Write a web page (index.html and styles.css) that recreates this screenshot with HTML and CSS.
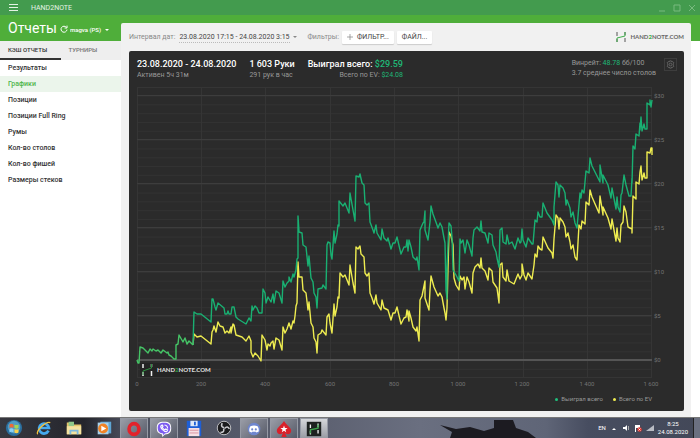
FILE: index.html
```html
<!DOCTYPE html>
<html lang="ru">
<head>
    <meta charset="UTF-8">
    <meta name="viewport" content="width=device-width, initial-scale=1.0">
    <title>HAND2NOTE</title>
    <link rel="stylesheet" href="styles.css">
</head>
<body>
    <!-- Window title bar -->
    <header class="titlebar">
        <button class="menu-btn" aria-label="Menu"><span></span><span></span><span></span></button>
        <span class="app-name">HAND2NOTE</span>
        <div class="window-buttons">
            <button aria-label="Minimize"><svg viewBox="0 0 8 8"><path d="M1 7H7"/></svg></button>
            <button aria-label="Maximize"><svg viewBox="0 0 8 8"><path d="M1 1H7V7H1Z"/></svg></button>
            <button aria-label="Close"><svg viewBox="0 0 8 8"><path d="M1 1L7 7M7 1L1 7"/></svg></button>
        </div>
    </header>

    <div class="app">
        <aside class="sidebar">
            <div class="sidebar-head">
                <h1>Отчеты</h1>
                <button class="refresh" aria-label="Refresh">
                    <svg viewBox="0 0 8 8"><path d="M6.4 2.4A3 3 0 1 0 7 4.6M7 .6V3H4.6"/></svg>
                </button>
                <div class="dropdown account">
                    <select aria-label="Account"><option>magva (PS)</option></select>
                    <span class="caret"></span>
                </div>
            </div>
            <div class="tabs">
                <button class="tab active">КЭШ ОТЧЕТЫ</button>
                <button class="tab">ТУРНИРЫ</button>
            </div>
            <nav>
                <ul class="menu">
                    <li><a href="#">Результаты</a></li>
                    <li><a href="#" class="active">Графики</a></li>
                    <li><a href="#">Позиции</a></li>
                    <li><a href="#">Позиции Full Ring</a></li>
                    <li><a href="#">Румы</a></li>
                    <li><a href="#">Кол-во столов</a></li>
                    <li><a href="#">Кол-во фишей</a></li>
                    <li><a href="#">Размеры стеков</a></li>
                </ul>
            </nav>
        </aside>

        <main class="content">
            <div class="toolbar">
                <label for="range">Интервал дат:</label>
                <div class="dropdown range">
                    <select id="range"><option>23.08.2020 17:15 - 24.08.2020 3:15</option></select>
                    <span class="caret"></span>
                </div>
                <span class="filters-label">Фильтры:</span>
                <button class="btn"><svg viewBox="0 0 8 8"><path d="M4 0V8M0 4H8"/></svg>ФИЛЬТР...</button>
                <button class="btn">ФАЙЛ...</button>
                <div class="brand">
                    <svg viewBox="0 0 12 12"><path class="post" d="M2 1V5M2 8V11M10 1V4M10 7V11"/><path class="link" d="M2 11V7L10 5V1"/></svg>
                    <span>HAND<b>2</b>NOTE.COM</span>
                </div>
            </div>

            <section class="card">
                <div class="stats">
                    <div class="stat">
                        <strong>23.08.2020 - 24.08.2020</strong>
                        <span>Активен 5ч 31м</span>
                    </div>
                    <div class="stat">
                        <strong>1 603 Руки</strong>
                        <span>291 рук в час</span>
                    </div>
                    <div class="stat won">
                        <strong>Выиграл всего: <em>$29.59</em></strong>
                        <span>Всего по EV: <em>$24.08</em></span>
                    </div>
                    <div class="stat rate">
                        <span>Винрейт: <em>48.78</em> бб/100</span>
                        <span>3.7 среднее число столов</span>
                    </div>
                    <button class="gear" aria-label="Settings">
                        <svg viewBox="0 0 10 10"><path d="M4 1H6L6.4 2.2L7.6 1.8L8.8 3.2L8 4.2V5.8L8.8 6.8L7.6 8.2L6.4 7.8L6 9H4L3.6 7.8L2.4 8.2L1.2 6.8L2 5.8V4.2L1.2 3.2L2.4 1.8L3.6 2.2Z"/><circle cx="5" cy="5" r="1.5"/></svg>
                    </button>
                </div>

                <svg class="chart" viewBox="129 84 555 308">
                    <defs>
                        <pattern id="minor" x="137" y="95.5" width="515" height="8.82" patternUnits="userSpaceOnUse">
                            <path d="M0 .5H515" class="minor"/>
                        </pattern>
                    </defs>
                    <rect x="137" y="87" width="515" height="290" fill="url(#minor)"/>
                    <path class="grid" d="M137.5 87V377M201.5 87V377M265.5 87V377M330.5 87V377M394.5 87V377M458.5 87V377M523.5 87V377M587.5 87V377M651.5 87V377M137 87.5H652M137 377.5H652"/>
                    <path class="major" d="M137 95.5H652M137 139.5H652M137 183.5H652M137 227.5H652M137 271.5H652M137 315.5H652"/>
                    <path class="zero" d="M137 360H652"/>

                    <g class="axis">
                        <text x="654" y="98">$30</text>
                        <text x="654" y="142">$25</text>
                        <text x="654" y="186">$20</text>
                        <text x="654" y="230">$15</text>
                        <text x="654" y="274">$10</text>
                        <text x="654" y="318">$5</text>
                        <text x="654" y="362">$0</text>
                    </g>
                    <g class="axis bottom">
                        <text x="137" y="386">0</text>
                        <text x="201" y="386">200</text>
                        <text x="265" y="386">400</text>
                        <text x="330" y="386">600</text>
                        <text x="394" y="386">800</text>
                        <text x="458" y="386">1 000</text>
                        <text x="522" y="386">1 200</text>
                        <text x="587" y="386">1 400</text>
                        <text x="651" y="386">1 600</text>
                    </g>

                    <!-- Logo inside the chart -->
                    <rect class="logo-bg" x="140" y="363" width="70" height="14"/>
                    <g class="logo">
                        <path class="post" d="M143 364V368M143 372V376M151.500 364V367M151.500 371V376"/>
                        <path class="link" d="M143 375V371L151.500 368V364"/>
                        <text x="157" y="372">HAND<tspan>2</tspan>NOTE.COM</text>
                    </g>

                    <!-- Total by EV -->
                    <polyline class="line ev" points="193,345 194,334 197,337 201,336 211,344 212,332 213,330 214,326 216,332 218,322 220,326 223,327 225,333 227,331 229,333 231,327 231,333 233,324 234,325 236,335 242,337 246,341 249,336 251,341 251,352 253,357 255,353 258,356 261,361 262,335 265,340 267,350 268,344 270,346 271,343 273,341 274,349 276,338 279,340 282,350 283,327 285,333 287,329 289,323 291,329 293,321 294,323 295,316 296,306 297,303 298,262 299,277 302,277 303,290 306,293 308,310 309,302 311,323 313,327 314,338 316,342 317,353 318,335 321,333 322,330 326,335 327,317 329,314 330,323 332,333 334,304 335,316 337,307 338,297 339,298 340,273 343,277 345,275 349,285 350,265 353,283 355,293 356,247 358,249 360,246 361,254 364,257 365,273 367,276 369,273 370,293 372,298 374,304 376,295 377,303 381,310 382,300 384,308 388,310 391,320 393,313 395,313 397,307 401,324 404,318 406,317 407,310 409,321 409,311 411,318 413,327 416,331 417,327 419,341 420,300 422,296 425,281 425,298 429,310 430,290 431,276 434,287 438,296 440,293 442,297 444,308 445,313 446,320 447,308 448,268 449,232 451,236 453,245 454,278 456,285 459,290 460,276 462,280 464,277 465,289 467,277 469,282 472,293 473,273 475,267 478,264 480,268 481,258 482,268 485,271 488,280 489,268 492,271 493,282 497,288 499,303 500,265 502,263 503,277 506,281 507,270 509,281 514,284 518,274 520,279 522,275 522,264 524,275 526,280 528,273 532,279 534,265 535,254 537,257 538,246 540,249 542,250 543,237 548,248 552,253 553,258 554,239 556,215 558,218 559,229 560,218 563,222 565,227 566,237 568,233 570,242 571,249 573,245 575,257 577,260 579,225 581,229 582,221 585,224 586,202 589,205 590,190 592,197 599,213 600,196 603,215 603,207 608,218 611,229 612,219 616,241 617,228 618,238 620,242 621,225 623,222 624,206 626,212 628,227 632,229 632,233 633,196 636,199 636,182 639,184 640,172 641,166 642,180 644,173 645,178 647,178 647,152 650,153 651,148 652,148 652,155"/>
                    <!-- Total won -->
                    <polyline class="line won" points="193,345 194,312 197,314 201,314 211,322 212,299 213,299 215,307 216,310 218,303 224,308 225,314 227,314 228,311 229,314 231,314 232,307 234,307 236,317 238,319 246,324 249,318 251,321 252,306 253,310 255,306 257,308 259,313 262,313 263,289 265,293 266,303 268,297 271,302 273,294 274,303 276,291 279,293 282,303 283,281 285,287 287,283 289,281 289,277 291,282 293,274 294,277 296,270 297,259 298,258 298,216 299,232 302,233 303,245 306,247 308,266 309,256 311,278 313,282 314,293 316,297 317,308 318,289 322,288 323,285 326,289 327,245 328,242 330,243 331,255 332,259 334,231 335,243 337,234 338,225 339,226 339,201 343,206 345,203 349,213 350,193 353,210 355,221 356,176 359,177 360,174 362,183 364,185 365,203 367,205 369,203 370,222 373,230 374,233 376,225 377,233 381,240 382,229 384,238 387,241 388,238 391,249 393,243 395,243 397,237 401,254 404,247 406,247 407,240 408,251 409,240 411,247 413,257 416,260 417,257 419,270 420,230 423,223 424,222 425,211 425,230 428,240 430,222 431,206 433,214 437,225 438,228 440,223 442,227 444,238 445,243 446,290 447,299 447,268 449,223 451,226 452,237 453,270 456,275 459,281 460,239 461,243 463,240 465,253 467,240 469,245 472,256 473,238 474,230 477,227 480,231 481,221 482,232 485,233 488,243 489,233 492,235 493,245 496,252 497,258 499,267 500,230 502,228 503,242 506,244 507,235 509,244 512,242 515,249 518,238 520,243 521,242 522,229 523,240 526,247 528,238 532,244 533,244 534,232 535,220 537,222 538,212 540,217 542,217 543,203 547,213 552,220 554,225 554,207 556,182 558,185 559,197 560,185 563,188 565,193 566,205 567,200 570,208 571,217 573,212 575,223 577,228 580,193 581,198 582,190 584,193 586,171 589,173 590,158 592,166 600,182 600,165 603,183 603,175 608,185 611,198 612,188 616,209 617,197 618,207 620,212 621,195 622,193 624,175 626,185 629,196 631,196 632,178 632,183 633,146 635,149 636,134 639,136 640,123 640,130 641,117 642,131 644,124 645,129 647,129 647,103 650,105 650,100 651,107 652,100"/>
                    <polyline class="line both" points="137,360 138,363 139,363 140,347 143,348 145,350 148,353 150,349 152,351 153,349 156,351 158,350 161,353 163,350 167,353 168,352 169,355 171,356 174,359 176,359 176,345 178,344 179,335 183,342 185,338 187,344 189,341 193,345"/>
                </svg>

                <div class="legend">
                    <span class="won">Выиграл всего</span>
                    <span class="ev">Всего по EV</span>
                </div>
            </section>
        </main>
    </div>

    <!-- Desktop taskbar -->
    <footer class="taskbar">
        <svg class="wallpaper" viewBox="0 0 700 20" preserveAspectRatio="none">
            <path d="M440 7L456 11L470 9L484 13L494 10V2H513L516 10L528 14L536 20H450L452 14Z"/>
        </svg>
        <button class="task" aria-label="Start">
            <svg viewBox="0 0 20 20"><circle cx="10" cy="10" r="9" fill="#2b6d9c"/><circle cx="10" cy="9" r="7" fill="#4f9cc4"/><path d="M5 6Q7 4.500 9.500 6V10Q7 8.500 5 10Z" fill="#f06a35"/><path d="M10.500 6Q13 7.500 15 6V10Q13 11.500 10.500 10Z" fill="#a6d650"/><path d="M5 11Q7 9.500 9.500 11V15Q7 13.500 5 15Z" fill="#8fd2f5"/><path d="M10.500 11Q13 12.500 15 11V15Q13 16.500 10.500 15Z" fill="#fbd14b"/></svg>
        </button>
        <button class="task" aria-label="Internet Explorer">
            <svg viewBox="0 0 20 20" fill="none"><path d="M15 13A5.500 5.500 0 1 1 15.500 10H5" stroke="#45a9ee" stroke-width="3"/><path d="M3 17C0 14 12 2 17 4" stroke="#f2c33d" stroke-width="1.500"/></svg>
        </button>
        <button class="task" aria-label="Explorer">
            <svg viewBox="0 0 20 20"><path d="M2 4H8L9 6H18V17H2Z" fill="#e3c46b"/><path d="M4 3H10V8H4Z" fill="#8fc98a"/><path d="M2 8H18V17H2Z" fill="#f5e3a0"/><path d="M6 17V13H14V17" stroke="#7db8dd" stroke-width="2" fill="none"/></svg>
        </button>
        <button class="task" aria-label="Media player">
            <svg viewBox="0 0 20 20"><rect x="6" y="3" width="12" height="13" fill="#5fa6d4"/><rect x="3" y="4" width="12" height="13" fill="#a8d2ec"/><circle cx="9" cy="10.500" r="5.500" fill="#f08326"/><path d="M7 7.500L12.500 10.500L7 13.500Z" fill="#fff"/></svg>
        </button>
        <button class="task open" aria-label="Opera">
            <svg viewBox="0 0 20 20"><ellipse cx="10" cy="10" rx="5.500" ry="6" fill="none" stroke="#e3222b" stroke-width="4"/></svg>
        </button>
        <button class="task open" aria-label="Viber">
            <svg viewBox="0 0 20 20"><path d="M10 2C16 2 18 4 18 9S16 16 11 16L8 19V16C4 15 2 14 2 9S4 2 10 2Z" fill="#fff"/><path d="M10 3C15 3 17 5 17 9S15 15 11 15L9 17V15C5 15 3 13 3 9S5 3 10 3Z" fill="#7d5cf0"/><path d="M7 6C5 8 9 13 13 13L14 11L12 10L11 11Q9 10 8 8L9 7L8 5.500ZM10.500 5.500Q14 6 14 9.500" fill="none" stroke="#fff" stroke-width="1.200"/></svg>
        </button>
        <button class="task" aria-label="Total Commander">
            <svg viewBox="0 0 20 20"><path d="M2 2H18V19H2Z" fill="#1e5fd6"/><rect x="6" y="2" width="8" height="6" fill="#dfe8f8"/><rect x="10" y="3" width="2" height="4" fill="#1e5fd6"/><rect x="4" y="10" width="12" height="9" fill="#f6dfe4"/><path d="M5 12.500H15M5 15.500H15" stroke="#d88f9d"/></svg>
        </button>
        <button class="task" aria-label="OBS">
            <svg viewBox="0 0 20 20"><circle cx="10" cy="10" r="7.500" fill="#1c1c1e" stroke="#c9c9cd"/><g fill="none" stroke="#c9c9cd" stroke-width="1.800"><path d="M10 9.500Q6 9 8 4.500"/><path d="M10.500 10.500Q14 7 16 11"/><path d="M9.500 10.500Q11 15 6 15"/></g></svg>
        </button>
        <button class="task open" aria-label="Discord">
            <svg viewBox="0 0 20 20"><rect x="3" y="3" width="14" height="14" rx="7" fill="#6e86cf"/><path d="M6 7Q10 5 14 7Q16 10 15 13L12.500 14L12 13H8L7.500 14L5 13Q4 10 6 7Z" fill="#fff"/><circle cx="8" cy="10.500" r="1.200" fill="#6e86cf"/><circle cx="12" cy="10.500" r="1.200" fill="#6e86cf"/></svg>
        </button>
        <button class="task open" aria-label="PokerStars">
            <svg viewBox="0 0 20 20"><path d="M10 1C12 5 18 8 18 12C18 16 13 17 11 14L13 19H7L9 14C7 17 2 16 2 12C2 8 8 5 10 1Z" fill="#d9202a"/><path d="M10 6L11 9H14L11.600 10.800L12.500 13.500L10 12L7.500 13.500L8.400 10.800L6 9H9Z" fill="#fff"/></svg>
        </button>
        <button class="task open current" aria-label="Hand2Note">
            <svg viewBox="0 0 20 20"><rect x="2" y="2" width="16" height="16" fill="#1d211f"/><path d="M6 5V9M6 12V16M14.500 4V8M14.500 11V15" stroke="#eee" stroke-width="1.500"/><path d="M6 15V11L14.500 9V5" fill="none" stroke="#3fa34d" stroke-width="1.500"/></svg>
        </button>
        <div class="tray">
            <span>EN</span>
            <svg viewBox="0 0 8 8"><path d="M2 6L4 4L6 6Z"/></svg>
            <svg viewBox="0 0 8 8"><path d="M1 3H3L5 1V7L3 5H1Z"/><path d="M6.500 2V6" stroke="#aaa"/></svg>
            <svg viewBox="0 0 8 8"><path d="M1 1H2V8H1ZM2 1H6V4H2Z"/><circle cx="5.500" cy="5.500" r="2.300" fill="#e0332c"/><path d="M4.500 4.500L6.500 6.500M6.500 4.500L4.500 6.500" stroke="#fff" stroke-width=".8"/></svg>
            <svg viewBox="0 0 8 8"><path d="M0 7L8 1V7Z" fill="#b9bcc4"/></svg>
            <div class="clock"><span>8:25</span><span>24.08.2020</span></div>
        </div>
        <button class="show-desktop" aria-label="Show desktop"></button>
    </footer>
</body>
</html>
```
FILE: styles.css
```css
html, body {
    height: 100%;
    margin: 0;
}

body {
    display: flex;
    flex-direction: column;
    min-height: 100%;
    font-family: Roboto, "Liberation Sans", sans-serif;
    font-size: 7px;
    line-height: 10px;
    color: #333;
    background-color: white;
}

button, select {
    margin: 0;
    padding: 0;
    border: none;
    background: none;
    font: inherit;
    color: inherit;
    cursor: pointer;
}

em {
    font-style: normal;
    color: #1fb877;
}

/* Title bar */
.titlebar {
    display: flex;
    align-items: center;
    flex: none;
    height: 15px;
    padding: 0 4px 0 9px;
    color: #e4f3e5;
    background-color: #439b4e;
}

.menu-btn {
    display: flex;
    flex-direction: column;
    gap: 2px;
    width: 9px;
    margin-right: 13px;
}

.menu-btn span {
    height: 1px;
    background-color: #e4f3e5;
}

.app-name {
    flex: 1;
}

.window-buttons {
    display: flex;
    gap: 7px;
}

.window-buttons svg {
    display: block;
    width: 8px;
    height: 8px;
    fill: none;
    stroke: #78ba7f;
}

/* Layout */
.app {
    display: flex;
    flex: 1;
    background: linear-gradient(#4fae3a 26px, white 26px);
}

.sidebar {
    flex: none;
    width: 121px;
}

.sidebar-head {
    display: flex;
    align-items: center;
    height: 26px;
    padding-left: 8px;
    color: white;
}

.sidebar-head h1 {
    margin: 0;
    font-size: 14px;
    font-weight: 400;
    line-height: 16px;
}

.refresh {
    margin: 2px 2px 0 3px;
}

.refresh svg {
    display: block;
    width: 8px;
    height: 8px;
    fill: none;
    stroke: white;
}

.dropdown {
    display: flex;
    align-items: center;
    gap: 3px;
}

.dropdown select {
    appearance: none;
}

.caret {
    border: 2px solid transparent;
    border-top-color: currentColor;
    border-bottom: none;
}

.account {
    padding-top: 4px;
    font-size: 6px;
    font-weight: 500;
}

/* Tabs */
.tabs {
    display: flex;
    height: 19px;
    background-color: #eee;
}

.tab {
    flex: 1;
    padding-left: 8px;
    font-size: 6px;
    font-weight: 500;
    text-align: left;
    color: #777;
    border-bottom: 2px solid transparent;
}

.tab.active {
    color: #333;
    border-bottom-color: #333;
}

/* Report list */
.menu {
    margin: 0;
    padding: 0;
    list-style: none;
}

.menu a {
    display: block;
    padding-left: 8px;
    font-weight: 500;
    line-height: 16px;
    color: #333;
    text-decoration: none;
}

.menu a.active {
    color: #4fb54b;
    background-color: #ebf5eb;
}

/* Content */
.content {
    flex: 1;
    min-width: 0;
    margin: 8px 9px 0 0;
    padding: 0 7px 6px 8px;
    border-radius: 2px 2px 0 0;
    background-color: #f1f1f1;
}

.toolbar {
    display: flex;
    align-items: center;
    height: 28px;
    color: #888;
}

.range {
    margin: 0 10px 0 4px;
}

.range select {
    color: #444;
    border-bottom: 1px dotted #bbb;
}

.filters-label {
    margin-right: 3px;
}

.btn {
    display: flex;
    align-items: center;
    gap: 4px;
    height: 13px;
    margin-right: 3px;
    padding: 0 5px;
    color: #444;
    border-radius: 1px;
    background-color: white;
    box-shadow: 0 1px 1px #ccc;
}

.btn svg {
    width: 6px;
    height: 6px;
    stroke: #888;
}

.brand {
    display: flex;
    align-items: center;
    gap: 3px;
    margin-left: auto;
    font-family: Lato, sans-serif;
    font-size: 6px;
    font-weight: 700;
    color: #666;
}

.brand b {
    color: #45ae4b;
}

.brand svg {
    width: 12px;
    height: 12px;
}

.post {
    fill: none;
    stroke: #555;
    stroke-width: 1;
}

.link {
    fill: none;
    stroke: #3fae4b;
    stroke-width: 1;
}

/* Chart card */
.card {
    padding-bottom: 2px;
    border-radius: 2px;
    background-color: #2b2b2b;
}

.stats {
    display: flex;
    height: 26px;
    padding: 7px 7px 0 8px;
    color: #999;
}

.stat {
    display: flex;
    flex-direction: column;
    margin-right: 13px;
}

.stat strong {
    font-size: 9px;
    font-weight: 500;
    line-height: 12px;
    color: white;
}

.stat.won {
    text-align: right;
}

.stat.rate {
    margin: 0 8px 0 auto;
}

.gear {
    width: 13px;
    height: 13px;
    border: 1px solid #3d3d3d;
}

.gear svg {
    display: block;
    width: 9px;
    height: 9px;
    margin: auto;
    fill: none;
    stroke: #666;
    stroke-width: 1;
}

.chart {
    display: block;
    width: 100%;
}

.grid {
    stroke: #353535;
}

.minor {
    stroke: #323232;
}

.major {
    stroke: #3d3d3d;
}

.zero {
    stroke: #555;
    stroke-width: 2;
}

.axis {
    font-size: 6px;
    fill: #747474;
}

.bottom {
    text-anchor: middle;
}

.line {
    fill: none;
    stroke-width: 1.4;
    stroke-linejoin: round;
}

.line.won {
    stroke: #19b072;
}

.line.ev {
    stroke: #eeec50;
}

.line.both {
    stroke: #45c466;
}

.logo-bg {
    fill: #242424;
}

.logo text {
    font-family: Lato, sans-serif;
    font-size: 6px;
    font-weight: 900;
    fill: #ddd;
}

.logo tspan {
    fill: #2f8f40;
}

.logo .post {
    stroke: #eee;
    stroke-width: 1.5;
}

.logo .link {
    stroke: #2f8f40;
}

.legend {
    display: flex;
    justify-content: flex-end;
    gap: 10px;
    height: 17px;
    padding: 2px 32px 0 0;
    box-sizing: border-box;
    font-size: 6px;
    color: #999;
}

.legend span::before {
    content: "";
    display: inline-block;
    width: 3px;
    height: 3px;
    margin-right: 3px;
    vertical-align: middle;
    border-radius: 50%;
    background-color: #1fc07c;
}

.legend .ev::before {
    background-color: #f0ee50;
}

/* Taskbar */
.taskbar {
    position: relative;
    display: flex;
    align-items: center;
    flex: none;
    height: 20px;
    border-top: 1px solid #777;
    background: linear-gradient(90deg, #37383f, #24252c 12%, #4b4f5e 18%, #5c6070 45%, #6a6f80 60%, #5f6577 78%, #474d60 84%, #434858);
}

/* Dark silhouette behind the task buttons */
.wallpaper {
    position: absolute;
    top: 0;
    left: 0;
    width: 100%;
    height: 100%;
    fill: #1c1b21;
}

.task {
    position: relative;
    width: 28px;
    height: 20px;
    margin-right: 2px;
    box-sizing: border-box;
}

.task.open {
    border: 1px solid #969aa5;
    border-bottom: none;
    background: linear-gradient(135deg, #9a9da7, #565a68);
}

.task.current {
    background: linear-gradient(#d5d7da, #989ba3);
}

.task svg {
    display: block;
    width: 18px;
    height: 18px;
    margin: auto;
}

.tray {
    display: flex;
    align-items: center;
    gap: 4px;
    margin-left: auto;
    font-size: 6px;
    color: white;
}

.tray svg {
    width: 8px;
    height: 8px;
    fill: white;
}

.clock {
    display: flex;
    flex-direction: column;
    align-items: center;
    line-height: 8px;
}

.show-desktop {
    width: 7px;
    height: 20px;
    margin-left: 5px;
    border-left: 1px solid #222;
    background-color: #6b7080;
}
```
